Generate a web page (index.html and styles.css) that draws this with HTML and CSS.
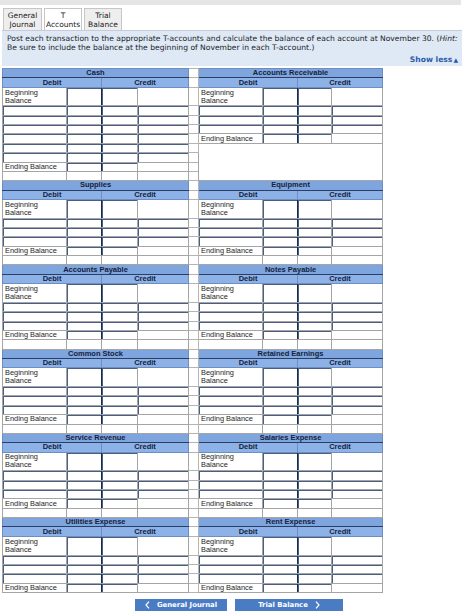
FILE: index.html
```html
<!DOCTYPE html>
<html>
<head>
<meta charset="utf-8">
<link rel="stylesheet" href="styles.css">
</head>
<body>
<div class="topbar"></div>
<div class="tabs">
  <div class="tab w39">General<br>Journal</div>
  <div class="tab on">T<br>Accounts</div>
  <div class="tab">Trial<br>Balance</div>
</div>
<div class="intro">
  <p>Post each transaction to the appropriate T-accounts and calculate the balance of each account at November 30. (<i>Hint:</i><br>Be sure to include the balance at the beginning of November in each T-account.)</p>
  <div class="showless">Show less<span class="tri">&#9650;</span></div>
</div>
<table class="tt">
  <colgroup>
    <col class="c1"><col class="c2"><col class="c3"><col class="c4"><col class="c5">
    <col class="c1"><col class="c2"><col class="c6"><col class="c4">
  </colgroup>
  <!-- Cash / Accounts Receivable -->
  <tr><td colspan="4" class="t1">Cash</td><td class="g"></td><td colspan="4" class="t1">Accounts Receivable</td></tr>
  <tr><td colspan="2" class="t2">Debit</td><td colspan="2" class="t2">Credit</td><td class="g"></td><td colspan="2" class="t2">Debit</td><td colspan="2" class="t2">Credit</td></tr>
  <tr class="bb"><td class="lb">Beginning<br>Balance</td><td class="i d"></td><td class="i"></td><td></td><td class="g"></td><td class="lb">Beginning<br>Balance</td><td class="i d"></td><td class="i"></td><td></td></tr>
  <tr><td class="i"></td><td class="i d"></td><td class="i"></td><td class="i"></td><td class="g"></td><td class="i"></td><td class="i d"></td><td class="i"></td><td class="i"></td></tr>
  <tr><td class="i"></td><td class="i d"></td><td class="i"></td><td class="i"></td><td class="g"></td><td class="i"></td><td class="i d"></td><td class="i"></td><td class="i"></td></tr>
  <tr><td class="i"></td><td class="i d"></td><td class="i"></td><td class="i"></td><td class="g"></td><td class="i"></td><td class="i d"></td><td class="i"></td><td class="i"></td></tr>
  <tr><td class="i"></td><td class="i d"></td><td class="i"></td><td class="i"></td><td class="g"></td><td class="lb">Ending Balance</td><td class="i d"></td><td class="i"></td><td></td></tr>
  <tr><td class="i"></td><td class="i d"></td><td class="i"></td><td class="i"></td><td class="g"></td><td colspan="4" rowspan="4" class="blank"></td></tr>
  <tr><td class="i"></td><td class="i d"></td><td class="i"></td><td class="i"></td><td class="g"></td></tr>
  <tr><td class="lb">Ending Balance</td><td class="i d"></td><td class="i"></td><td></td><td class="g"></td></tr>
  <tr><td></td><td></td><td></td><td></td><td class="g"></td></tr>
  <!-- Supplies / Equipment -->
  <tr><td colspan="4" class="t1">Supplies</td><td class="g"></td><td colspan="4" class="t1">Equipment</td></tr>
  <tr><td colspan="2" class="t2">Debit</td><td colspan="2" class="t2">Credit</td><td class="g"></td><td colspan="2" class="t2">Debit</td><td colspan="2" class="t2">Credit</td></tr>
  <tr class="bb"><td class="lb">Beginning<br>Balance</td><td class="i d"></td><td class="i"></td><td></td><td class="g"></td><td class="lb">Beginning<br>Balance</td><td class="i d"></td><td class="i"></td><td></td></tr>
  <tr><td class="i"></td><td class="i d"></td><td class="i"></td><td class="i"></td><td class="g"></td><td class="i"></td><td class="i d"></td><td class="i"></td><td class="i"></td></tr>
  <tr><td class="i"></td><td class="i d"></td><td class="i"></td><td class="i"></td><td class="g"></td><td class="i"></td><td class="i d"></td><td class="i"></td><td class="i"></td></tr>
  <tr><td class="i"></td><td class="i d"></td><td class="i"></td><td class="i"></td><td class="g"></td><td class="i"></td><td class="i d"></td><td class="i"></td><td class="i"></td></tr>
  <tr><td class="lb">Ending Balance</td><td class="i d"></td><td class="i"></td><td></td><td class="g"></td><td class="lb">Ending Balance</td><td class="i d"></td><td class="i"></td><td></td></tr>
  <tr><td></td><td></td><td></td><td></td><td class="g"></td><td></td><td></td><td></td><td></td></tr>
  <!-- Accounts Payable / Notes Payable -->
  <tr><td colspan="4" class="t1">Accounts Payable</td><td class="g"></td><td colspan="4" class="t1">Notes Payable</td></tr>
  <tr><td colspan="2" class="t2">Debit</td><td colspan="2" class="t2">Credit</td><td class="g"></td><td colspan="2" class="t2">Debit</td><td colspan="2" class="t2">Credit</td></tr>
  <tr class="bb"><td class="lb">Beginning<br>Balance</td><td class="i d"></td><td class="i"></td><td></td><td class="g"></td><td class="lb">Beginning<br>Balance</td><td class="i d"></td><td class="i"></td><td></td></tr>
  <tr><td class="i"></td><td class="i d"></td><td class="i"></td><td class="i"></td><td class="g"></td><td class="i"></td><td class="i d"></td><td class="i"></td><td class="i"></td></tr>
  <tr><td class="i"></td><td class="i d"></td><td class="i"></td><td class="i"></td><td class="g"></td><td class="i"></td><td class="i d"></td><td class="i"></td><td class="i"></td></tr>
  <tr><td class="i"></td><td class="i d"></td><td class="i"></td><td class="i"></td><td class="g"></td><td class="i"></td><td class="i d"></td><td class="i"></td><td class="i"></td></tr>
  <tr><td class="lb">Ending Balance</td><td class="i d"></td><td class="i"></td><td></td><td class="g"></td><td class="lb">Ending Balance</td><td class="i d"></td><td class="i"></td><td></td></tr>
  <tr><td></td><td></td><td></td><td></td><td class="g"></td><td></td><td></td><td></td><td></td></tr>
  <!-- Common Stock / Retained Earnings -->
  <tr><td colspan="4" class="t1">Common Stock</td><td class="g"></td><td colspan="4" class="t1">Retained Earnings</td></tr>
  <tr><td colspan="2" class="t2">Debit</td><td colspan="2" class="t2">Credit</td><td class="g"></td><td colspan="2" class="t2">Debit</td><td colspan="2" class="t2">Credit</td></tr>
  <tr class="bb"><td class="lb">Beginning<br>Balance</td><td class="i d"></td><td class="i"></td><td></td><td class="g"></td><td class="lb">Beginning<br>Balance</td><td class="i d"></td><td class="i"></td><td></td></tr>
  <tr><td class="i"></td><td class="i d"></td><td class="i"></td><td class="i"></td><td class="g"></td><td class="i"></td><td class="i d"></td><td class="i"></td><td class="i"></td></tr>
  <tr><td class="i"></td><td class="i d"></td><td class="i"></td><td class="i"></td><td class="g"></td><td class="i"></td><td class="i d"></td><td class="i"></td><td class="i"></td></tr>
  <tr><td class="i"></td><td class="i d"></td><td class="i"></td><td class="i"></td><td class="g"></td><td class="i"></td><td class="i d"></td><td class="i"></td><td class="i"></td></tr>
  <tr><td class="lb">Ending Balance</td><td class="i d"></td><td class="i"></td><td></td><td class="g"></td><td class="lb">Ending Balance</td><td class="i d"></td><td class="i"></td><td></td></tr>
  <tr><td></td><td></td><td></td><td></td><td class="g"></td><td></td><td></td><td></td><td></td></tr>
  <!-- Service Revenue / Salaries Expense -->
  <tr><td colspan="4" class="t1">Service Revenue</td><td class="g"></td><td colspan="4" class="t1">Salaries Expense</td></tr>
  <tr><td colspan="2" class="t2">Debit</td><td colspan="2" class="t2">Credit</td><td class="g"></td><td colspan="2" class="t2">Debit</td><td colspan="2" class="t2">Credit</td></tr>
  <tr class="bb"><td class="lb">Beginning<br>Balance</td><td class="i d"></td><td class="i"></td><td></td><td class="g"></td><td class="lb">Beginning<br>Balance</td><td class="i d"></td><td class="i"></td><td></td></tr>
  <tr><td class="i"></td><td class="i d"></td><td class="i"></td><td class="i"></td><td class="g"></td><td class="i"></td><td class="i d"></td><td class="i"></td><td class="i"></td></tr>
  <tr><td class="i"></td><td class="i d"></td><td class="i"></td><td class="i"></td><td class="g"></td><td class="i"></td><td class="i d"></td><td class="i"></td><td class="i"></td></tr>
  <tr><td class="i"></td><td class="i d"></td><td class="i"></td><td class="i"></td><td class="g"></td><td class="i"></td><td class="i d"></td><td class="i"></td><td class="i"></td></tr>
  <tr><td class="lb">Ending Balance</td><td class="i d"></td><td class="i"></td><td></td><td class="g"></td><td class="lb">Ending Balance</td><td class="i d"></td><td class="i"></td><td></td></tr>
  <tr><td></td><td></td><td></td><td></td><td class="g"></td><td></td><td></td><td></td><td></td></tr>
  <!-- Utilities Expense / Rent Expense -->
  <tr><td colspan="4" class="t1">Utilities Expense</td><td class="g"></td><td colspan="4" class="t1">Rent Expense</td></tr>
  <tr><td colspan="2" class="t2">Debit</td><td colspan="2" class="t2">Credit</td><td class="g"></td><td colspan="2" class="t2">Debit</td><td colspan="2" class="t2">Credit</td></tr>
  <tr class="bb"><td class="lb">Beginning<br>Balance</td><td class="i d"></td><td class="i"></td><td></td><td class="g"></td><td class="lb">Beginning<br>Balance</td><td class="i d"></td><td class="i"></td><td></td></tr>
  <tr><td class="i"></td><td class="i d"></td><td class="i"></td><td class="i"></td><td class="g"></td><td class="i"></td><td class="i d"></td><td class="i"></td><td class="i"></td></tr>
  <tr><td class="i"></td><td class="i d"></td><td class="i"></td><td class="i"></td><td class="g"></td><td class="i"></td><td class="i d"></td><td class="i"></td><td class="i"></td></tr>
  <tr><td class="i"></td><td class="i d"></td><td class="i"></td><td class="i"></td><td class="g"></td><td class="i"></td><td class="i d"></td><td class="i"></td><td class="i"></td></tr>
  <tr><td class="lb">Ending Balance</td><td class="i d"></td><td class="i"></td><td></td><td class="g"></td><td class="lb">Ending Balance</td><td class="i d"></td><td class="i"></td><td></td></tr>
</table>
<div class="nav">
  <div class="btn prev"><svg class="chev" width="5" height="8" viewBox="0 0 5 8"><path d="M4 0.6 L1 4 L4 7.4" fill="none" stroke="#fff" stroke-width="1.2"/></svg><span>General Journal</span></div>
  <div class="btn next"><span>Trial Balance</span><svg class="chev" width="5" height="8" viewBox="0 0 5 8"><path d="M1 0.6 L4 4 L1 7.4" fill="none" stroke="#fff" stroke-width="1.2"/></svg></div>
</div>
</body>
</html>
```

FILE: styles.css
```css
* { box-sizing: border-box; }
html, body { margin: 0; padding: 0; background: #fff; }
body {
  width: 474px;
  font-family: "Liberation Sans", Arial, sans-serif;
  color: #1e1e1e;
}
.topbar {
  height: 5px;
  width: 461px;
  background: #e5e5e5;
}
.tabs {
  display: flex;
  gap: 2px;
  margin: 3px 0 0 3px;
  height: 22px;
}
.tab {
  width: 38px;
  border: 1px solid #c6c6c6;
  border-bottom: none;
  background: #eeeeee;
  font-family: "DejaVu Sans", Verdana, sans-serif;
  font-size: 7.5px;
  line-height: 9px;
  text-align: center;
  padding-top: 2px;
  color: #222;
}
.tab.w39 { width: 39px; }
.tab.on { background: #fff; }
.intro {
  margin-left: 2px;
  width: 460px;
  height: 36px;
  background: #dfe9f6;
  border-top: 1px solid #c3ccd8;
  font-family: "DejaVu Sans", Verdana, sans-serif;
  font-size: 7.6px;
  line-height: 8.8px;
  padding: 4px 2px 0 5px;
  color: #1e1e1e;
}
.intro p { margin: 0; white-space: nowrap; }
.showless {
  margin-top: 3px;
  padding-right: 2px;
  text-align: right;
  font-weight: bold;
  color: #2b5ca8;
}
.tri { font-size: 6px; margin-left: 1px; }

.tt {
  border-collapse: collapse;
  table-layout: fixed;
  width: 380px;
  margin: 2px 0 0 2px;
  font-size: 7.4px;
  line-height: 8px;
}
.c1 { width: 64px; }
.c2 { width: 35px; }
.c3 { width: 36px; }
.c4 { width: 51px; }
.c5 { width: 10px; }
.c6 { width: 34px; }
.tt td {
  border: 1px solid #a5a5a5;
  padding: 0;
  height: 9.36px;
  vertical-align: middle;
  background: #fff;
}
.tt tr.bb td { height: 18.7px; }
.tt td.t1 {
  background: #7ea5de;
  text-align: center;
  font-weight: bold;
  color: #14223d;
  font-size: 7.5px;
  border-color: #6e8ec2;
  border-bottom-color: #2b3f66;
}
.tt td.t2 {
  background: #8db2e8;
  text-align: center;
  font-weight: bold;
  color: #14223d;
  font-size: 7.5px;
  border-color: #6e8ec2;
}
.tt td.g { border-color: #b4b4b4; }
.tt td.lb { padding-left: 2px; color: #1e1e1e; }
.tt td.i { box-shadow: inset 1px 1px 0 #4a5d82; }
.tt td.d { border-right-color: #1b2a48; }
.tt td.blank { border-color: #a5a5a5; }

.nav {
  display: flex;
  justify-content: center;
  gap: 8px;
  margin-top: 6px;
  padding-left: 4px;
}
.btn {
  height: 12px;
  background: #4a7cc4;
  color: #fff;
  font-family: "DejaVu Sans", Verdana, sans-serif;
  font-weight: bold;
  font-size: 6.9px;
  display: flex;
  align-items: center;
  justify-content: center;
  gap: 7px;
}
.btn.prev { width: 92px; }
.btn.next { width: 108px; }
.chev { display: block; }
```
